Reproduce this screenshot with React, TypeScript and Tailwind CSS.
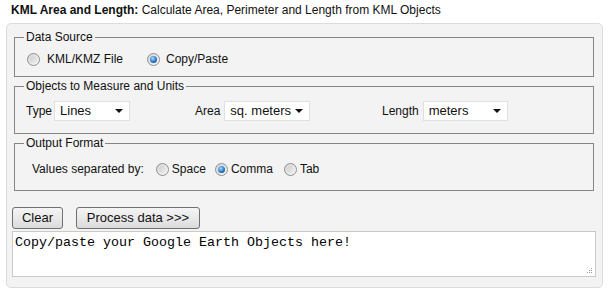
import React from 'react';

const Radio: React.FC<{ checked?: boolean }> = ({ checked }) => (
  <span className="relative inline-flex h-[13px] w-[13px] shrink-0 items-center justify-center rounded-full border border-[#8f8f8f] bg-[linear-gradient(135deg,#d4d4d4,#f8f8f8)]">
    {checked ? (
      <span className="h-[7px] w-[7px] rounded-full bg-[radial-gradient(circle_at_40%_35%,#a9dcff,#2a78c6_55%,#0c3a72)]" />
    ) : (
      <span className="h-[7px] w-[7px] rounded-full bg-[linear-gradient(135deg,#cfcfcf,#ececec)]" />
    )}
  </span>
);

const Select: React.FC<{ value: string; width: string }> = ({ value, width }) => (
  <div
    className={`flex h-[20px] items-center justify-between border border-[#e0e0e0] bg-white pl-[5px] pr-[6px] text-[13px] ${width}`}
  >
    <span>{value}</span>
    <svg width="8" height="4" viewBox="0 0 8 4">
      <path d="M0 0h8L4 4z" fill="#111" />
    </svg>
  </div>
);

const Fieldset: React.FC<{ legend: string; className?: string; children: React.ReactNode }> = ({
  legend,
  className = '',
  children,
}) => (
  <fieldset className={`border border-[#858585] pl-[9px] ${className}`}>
    <legend className="px-[2px] leading-[14px]">{legend}</legend>
    {children}
  </fieldset>
);

const btn =
  'h-[22px] rounded-[3px] border border-[#707070] bg-[linear-gradient(#f4f4f4,#e9e9e9_50%,#dadada)] text-[13px]';

export default function App() {
  return (
    <div className="h-[294px] w-[609px] bg-white font-['Liberation_Sans',Arial,sans-serif] text-[12px] text-[#111]">
      <div className="h-[23px] pl-[11px] pt-[3px] leading-[15px]">
        <b>KML Area and Length:</b> Calculate Area, Perimeter and Length from KML Objects
      </div>

      <div className="ml-[6px] h-[265px] w-[597px] rounded-[5px] border border-[#dcdcdc] bg-[#f3f3f3] pl-[7px] pr-[8px] pt-[6px]">
        <Fieldset legend="Data Source" className="pb-[7px]">
          <div className="mt-[5px] flex h-[20px] items-center pl-[3px]">
            <Radio />
            <span className="ml-[7px]">KML/KMZ File</span>
            <span className="ml-[24px]">
              <Radio checked />
            </span>
            <span className="ml-[6px]">Copy/Paste</span>
          </div>
        </Fieldset>

        <Fieldset legend="Objects to Measure and Units" className="mt-[2px] pb-[11px]">
          <div className="mt-[7px] flex h-[22px] items-center pl-[2px]">
            <div className="flex w-[169px] items-center gap-[2px]">
              <span>Type</span>
              <Select value="Lines" width="w-[76px]" />
            </div>
            <div className="flex w-[187px] items-center gap-[4px]">
              <span>Area</span>
              <Select value="sq. meters" width="w-[86px]" />
            </div>
            <div className="flex items-center gap-[4px]">
              <span>Length</span>
              <Select value="meters" width="w-[85px]" />
            </div>
          </div>
        </Fieldset>

        <Fieldset legend="Output Format" className="mt-[2px] pb-[11px]">
          <div className="mt-[9px] flex h-[20px] items-center pl-[8px]">
            <span>Values separated by:</span>
            <span className="ml-[12px]">
              <Radio />
            </span>
            <span className="ml-[3px]">Space</span>
            <span className="ml-[9px]">
              <Radio checked />
            </span>
            <span className="ml-[3px]">Comma</span>
            <span className="ml-[11px]">
              <Radio />
            </span>
            <span className="ml-[3px]">Tab</span>
          </div>
        </Fieldset>

        <div className="-ml-[2px] mt-[16px] flex gap-[13px]">
          <button className={`${btn} w-[51px]`}>Clear</button>
          <button className={`${btn} w-[124px]`}>Process data &gt;&gt;&gt;</button>
        </div>

        <div className="relative -ml-[2px] mt-[2px] h-[46px] w-[584px]">
          <textarea
            className="h-full w-full resize-none border border-[#c9c9c9] bg-white px-[2px] pt-[3px] font-['Liberation_Mono','Courier_New',monospace] text-[13.33px] leading-[15px] text-black outline-none"
            defaultValue="Copy/paste your Google Earth Objects here!"
          />
          <svg className="absolute bottom-[3px] right-[3px]" width="7" height="7" viewBox="0 0 7 7">
            <g fill="#9a9a9a">
              <rect x="5" y="1" width="1" height="1" />
              <rect x="3" y="3" width="1" height="1" />
              <rect x="5" y="3" width="1" height="1" />
              <rect x="1" y="5" width="1" height="1" />
              <rect x="3" y="5" width="1" height="1" />
              <rect x="5" y="5" width="1" height="1" />
            </g>
          </svg>
        </div>
      </div>
    </div>
  );
}
